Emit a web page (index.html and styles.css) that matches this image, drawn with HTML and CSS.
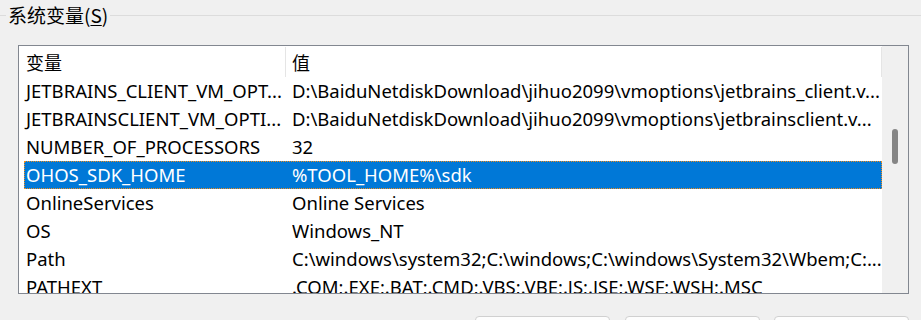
FILE: index.html
```html
<!DOCTYPE html>
<html lang="zh-CN">
<head>
  <meta charset="UTF-8">
  <title>系统变量</title>
  <link rel="stylesheet" href="styles.css">
</head>
<body>
  <div class="group">
    <div class="legend">
      <span class="rule short"></span>
      <span class="title">系统变量(<u>S</u>)</span>
      <span class="rule"></span>
    </div>

    <div class="listbox">
      <div class="list">
        <div class="header">
          <div class="hcol name">变量</div>
          <div class="hcol value">值</div>
        </div>
        <div class="rows">
          <div class="row"><div class="cell name">JETBRAINS_CLIENT_VM_OPT...</div><div class="cell value">D:\BaiduNetdiskDownload\jihuo2099\vmoptions\jetbrains_client.v...</div></div>
          <div class="row"><div class="cell name">JETBRAINSCLIENT_VM_OPTI...</div><div class="cell value">D:\BaiduNetdiskDownload\jihuo2099\vmoptions\jetbrainsclient.v...</div></div>
          <div class="row"><div class="cell name">NUMBER_OF_PROCESSORS</div><div class="cell value">32</div></div>
          <div class="row selected"><div class="cell name">OHOS_SDK_HOME</div><div class="cell value">%TOOL_HOME%\sdk</div></div>
          <div class="row"><div class="cell name">OnlineServices</div><div class="cell value">Online Services</div></div>
          <div class="row"><div class="cell name">OS</div><div class="cell value">Windows_NT</div></div>
          <div class="row"><div class="cell name">Path</div><div class="cell value">C:\windows\system32;C:\windows;C:\windows\System32\Wbem;C:...</div></div>
          <div class="row"><div class="cell name">PATHEXT</div><div class="cell value">.COM;.EXE;.BAT;.CMD;.VBS;.VBE;.JS;.JSE;.WSF;.WSH;.MSC</div></div>
        </div>
      </div>
      <div class="scrollbar"><div class="thumb"></div></div>
    </div>

    <div class="buttons">
      <button class="btn">新建(W)...</button>
      <button class="btn">编辑(I)...</button>
      <button class="btn">删除(L)</button>
    </div>
  </div>
</body>
</html>
```

FILE: styles.css
```css
body {
  margin: 0;
  height: 320px;
  overflow: hidden;
  background-color: #f0f0f0;
  font-family: "Segoe UI", "Noto Sans", "Noto Sans CJK SC", sans-serif;
  color: #000;
}
.legend {
  display: flex;
  align-items: center;
  height: 30px;
}
.rule {
  flex: 1;
  border-top: 1px solid #dcdcdc;
}
.rule.short {
  flex: 0 0 6px;
}
.title {
  padding: 0 2px;
  font-family: "Noto Sans CJK SC", sans-serif;
  font-size: 19px;
  line-height: 30px;
}
.title u {
  text-underline-offset: 2px;
}
.listbox {
  display: flex;
  box-sizing: border-box;
  width: 891px;
  height: 249px;
  margin: 15px 0 0 18px;
  border: 1px solid #828790;
  background-color: #fff;
}
.list {
  flex: 1;
  display: flex;
  flex-direction: column;
  overflow: hidden;
}
.header {
  display: flex;
  height: 31px;
  flex: none;
}
.hcol {
  box-sizing: border-box;
  height: 30px;
  margin-top: 1px;
  border-right: 1px solid #e5e5e5;
  font-family: "Noto Sans CJK SC", sans-serif;
  font-size: 18px;
  line-height: 30px;
}
.hcol.name {
  width: 267px;
  padding-left: 7px;
}
.hcol.value {
  flex: 1;
  padding-left: 6px;
}
.rows {
  flex: 1;
  overflow: hidden;
}
.row {
  display: flex;
  box-sizing: border-box;
  height: 28px;
  margin-left: 5px;
  font-size: 18.5px;
  line-height: 27px;
  white-space: nowrap;
}
.cell {
  overflow: hidden;
}
.cell.name {
  box-sizing: border-box;
  width: 268px;
  flex: none;
  padding-left: 2px;
}
.cell.value {
  flex: 1;
}
.row.selected {
  background-color: #0078d7;
  color: #fff;
  border: 1px dotted #f08c1c;
  line-height: 25px;
}
.row.selected .cell.name {
  padding-left: 1px;
}
.row.selected .cell.value {
  margin-left: -1px;
}
.scrollbar {
  flex: none;
  width: 26px;
  background-color: #f0f0f0;
}
.thumb {
  width: 6px;
  height: 35px;
  margin: 83px 0 0 10px;
  border-radius: 3px;
  background-color: #858585;
}
.buttons {
  display: flex;
  gap: 15px;
  justify-content: flex-end;
  width: 909px;
  margin-top: 22px;
}
.btn {
  box-sizing: border-box;
  width: 135px;
  height: 36px;
  border: 1px solid #d0d0d0;
  border-radius: 4px;
  background-color: #fdfdfd;
  font-family: "Noto Sans CJK SC", sans-serif;
  font-size: 17px;
}
.btn:nth-child(2) {
  margin-right: -1px;
}
```
